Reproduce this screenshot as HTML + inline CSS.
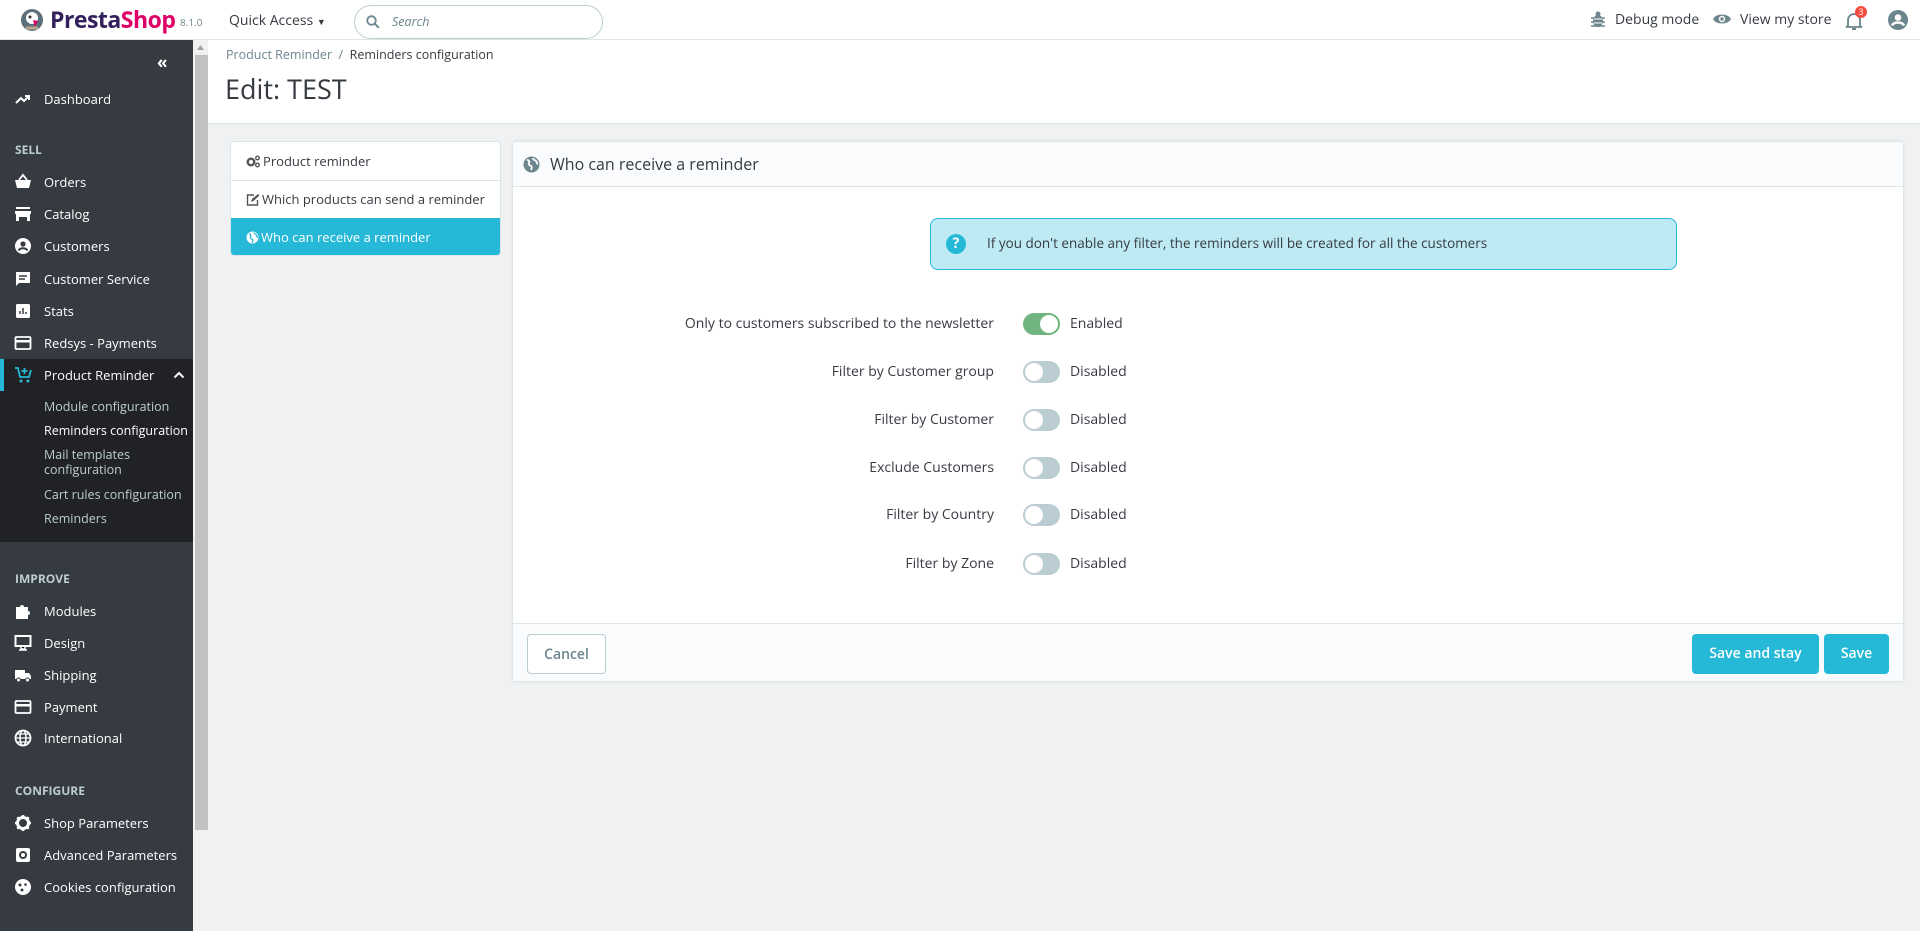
<!DOCTYPE html>
<html><head><meta charset="utf-8"><style>
*{box-sizing:border-box;margin:0;padding:0}
body{width:1920px;height:931px;overflow:hidden;background:#eff1f2;font-family:"Open Sans","Liberation Sans",sans-serif;color:#363a41;position:relative;font-size:14px}
.abs{position:absolute}
#hdr{left:0;top:0;width:1920px;height:40px;background:#fff;border-bottom:1px solid #e4e4e4}
#side{left:0;top:40px;width:193px;height:891px;background:#363a41}
#scroll{left:193px;top:40px;width:15px;height:891px;background:#f1f1f1}
#thumb{left:195px;top:55px;width:13px;height:775px;background:#c1c1c1}
.si{position:absolute;left:0;width:193px;color:#fff;font-size:13px;line-height:20px}
.si svg{position:absolute;left:14px;top:1px}
.si span{position:absolute;left:44px;top:0;white-space:nowrap}
.sec{position:absolute;left:15px;color:#bbcdd2;font-weight:bold;font-size:12px}
.sub{position:absolute;left:44px;color:#bbcdd2;font-size:12.5px;line-height:15px}
#chead{left:208px;top:40px;width:1712px;height:84px;background:#fff;border-bottom:1px solid #dbe6e9}
.tab{position:absolute;left:0;width:271px;padding-left:15px;font-size:13px;color:#363a41}
.tab svg{vertical-align:-2px;margin-right:2px}
.row{position:absolute;left:0;width:1392px;height:24px}
.row .l{position:absolute;right:calc(1392px - 481px);top:2px;font-size:14px;color:#363a41;white-space:nowrap}
.sw{position:absolute;left:510px;top:1px;width:37px;height:22px;border-radius:11px;background:#bbcdd2}
.sw i{position:absolute;top:2px;width:18px;height:18px;border-radius:50%;background:#fff}
.row .t{position:absolute;left:557px;top:2px;font-size:14px;color:#363a41}
.btn{position:absolute;border-radius:4px;font-size:14px;font-weight:600;text-align:center;line-height:39px}
</style></head><body>
<div id="hdr" class="abs">
  <svg class="abs" style="left:20px;top:8px" width="24" height="24" viewBox="0 0 24 24"><circle cx="12" cy="12" r="11" fill="#5d6f7a"/><circle cx="12" cy="10" r="6" fill="#fff"/><circle cx="10" cy="9" r="1.5" fill="#333"/><path d="M13 12l5 1-3 6z" fill="#df0067"/><path d="M6 20h12" stroke="#b7a58c" stroke-width="3"/></svg>
  <div class="abs" style="left:50px;top:3px;font-size:23px;font-weight:bold;letter-spacing:-0.5px;color:#34205c">Presta<span style="color:#df0067">Shop</span></div>
  <div class="abs" style="left:180px;top:15px;font-size:10px;color:#6c868e">8.1.0</div>
  <div class="abs" style="left:229px;top:11px;font-size:14px;color:#363a41">Quick Access <span style="font-size:9px">&#9660;</span></div>
  <div class="abs" style="left:354px;top:5px;width:249px;height:34px;border:1px solid #bbcdd2;border-radius:17px">
    <svg class="abs" style="left:11px;top:9px" width="14" height="14" viewBox="0 0 14 14"><circle cx="5.5" cy="5.5" r="4.3" fill="none" stroke="#6c868e" stroke-width="1.8"/><path d="M8.8 8.8l4 4" stroke="#6c868e" stroke-width="2"/></svg>
    <div class="abs" style="left:37px;top:7px;font-size:12.5px;font-style:italic;color:#6c868e">Search</div>
  </div>
  <svg class="abs" style="left:1590px;top:11px" width="16" height="18" viewBox="0 0 16 18"><ellipse cx="8" cy="10" rx="5" ry="6" fill="#6c868e"/><circle cx="8" cy="3" r="2.5" fill="#6c868e"/><path d="M1 7h14M1 11h14M1 15h14" stroke="#6c868e" stroke-width="1.5"/><path d="M4 8h8M4 12h8" stroke="#fff" stroke-width="1"/></svg>
  <div class="abs" style="left:1615px;top:10px;font-size:14px;color:#363a41">Debug mode</div>
  <svg class="abs" style="left:1712px;top:12px" width="20" height="14" viewBox="0 0 20 14"><path d="M1 7C4 1 16 1 19 7C16 13 4 13 1 7z" fill="#6c868e"/><circle cx="10" cy="7" r="3.2" fill="#fff"/><circle cx="10" cy="7" r="1.7" fill="#6c868e"/></svg>
  <div class="abs" style="left:1740px;top:10px;font-size:14px;color:#363a41">View my store</div>
  <svg class="abs" style="left:1845px;top:11px" width="18" height="20" viewBox="0 0 18 20"><path d="M3 15V9a6 6 0 0 1 12 0v6l2 1H1z" fill="none" stroke="#6c868e" stroke-width="1.8"/><path d="M7 18h4" stroke="#6c868e" stroke-width="2"/></svg>
  <div class="abs" style="left:1855px;top:6px;width:12px;height:12px;border-radius:50%;background:#f54c3e;color:#fff;font-size:9px;line-height:12px;text-align:center">3</div>
  <svg class="abs" style="left:1888px;top:10px" width="20" height="20" viewBox="0 0 20 20"><circle cx="10" cy="10" r="10" fill="#6c868e"/><circle cx="10" cy="7.5" r="3.3" fill="#fff"/><path d="M4 15.5c2-4 10-4 12 0" stroke="#fff" stroke-width="2.5" fill="none"/></svg>
</div>

<div id="side" class="abs">
  <div class="abs" style="left:157px;top:10px;color:#fff;font-size:17px;font-weight:bold">&#171;</div>
  <div class="si" style="top:49px"><svg width="18" height="18" viewBox="0 0 18 18"><path d="M2 13l5-5 3 3 5-5M11 6h4v4" stroke="#fff" stroke-width="2" fill="none"/></svg><span>Dashboard</span></div>
  <div class="sec" style="top:101px">SELL</div>
  <div class="si" style="top:132px"><svg width="18" height="18" viewBox="0 0 18 18"><path d="M1 7h16l-2 8H3z" fill="#fff"/><path d="M5 7l4-5 4 5" stroke="#fff" stroke-width="1.8" fill="none"/></svg><span>Orders</span></div>
  <div class="si" style="top:164px"><svg width="18" height="18" viewBox="0 0 18 18"><rect x="2" y="2" width="14" height="2" fill="#fff"/><path d="M1 6h16v3H1zM2 9h14v7h-3v-4H5v4H2z" fill="#fff"/></svg><span>Catalog</span></div>
  <div class="si" style="top:196px"><svg width="18" height="18" viewBox="0 0 18 18"><circle cx="9" cy="9" r="8" fill="#fff"/><circle cx="9" cy="7" r="2.6" fill="#363a41"/><path d="M4.5 13.5c2-3 7-3 9 0" stroke="#363a41" stroke-width="2" fill="none"/></svg><span>Customers</span></div>
  <div class="si" style="top:229px"><svg width="18" height="18" viewBox="0 0 18 18"><path d="M2 2h14v11H5l-3 3z" fill="#fff"/><path d="M5 6h8M5 9h6" stroke="#363a41" stroke-width="1.5"/></svg><span>Customer Service</span></div>
  <div class="si" style="top:261px"><svg width="18" height="18" viewBox="0 0 18 18"><rect x="2" y="2" width="14" height="14" rx="1.5" fill="#fff"/><path d="M6 12V9M9 12V6M12 12v-2" stroke="#363a41" stroke-width="1.5"/></svg><span>Stats</span></div>
  <div class="si" style="top:293px"><svg width="18" height="18" viewBox="0 0 18 18"><rect x="1.5" y="3" width="15" height="12" rx="1" fill="none" stroke="#fff" stroke-width="1.8"/><rect x="2" y="6" width="14" height="2.5" fill="#fff"/></svg><span>Redsys - Payments</span></div>
  <div class="abs" style="left:0;top:319px;width:193px;height:183px;background:#202226"></div>
  <div class="abs" style="left:0;top:319px;width:4px;height:32px;background:#25b9d7"></div>
  <div class="si" style="top:325px"><svg width="18" height="18" viewBox="0 0 18 18"><path d="M1 2h3l2 9h9l2-7" stroke="#25b9d7" stroke-width="1.8" fill="none"/><circle cx="7" cy="15" r="1.5" fill="#25b9d7"/><circle cx="14" cy="15" r="1.5" fill="#25b9d7"/><path d="M10.5 2v6M7.5 5h6" stroke="#25b9d7" stroke-width="1.8"/></svg><span>Product Reminder</span><svg style="left:173px;top:6px" width="12" height="8" viewBox="0 0 12 8"><path d="M1.5 6.5L6 2l4.5 4.5" stroke="#fff" stroke-width="2" fill="none"/></svg></div>
  <div class="sub" style="top:359px">Module configuration</div>
  <div class="sub" style="top:383px;color:#fff">Reminders configuration</div>
  <div class="sub" style="top:407px">Mail templates<br>configuration</div>
  <div class="sub" style="top:447px">Cart rules configuration</div>
  <div class="sub" style="top:471px">Reminders</div>
  <div class="sec" style="top:530px">IMPROVE</div>
  <div class="si" style="top:561px"><svg width="18" height="18" viewBox="0 0 18 18"><path d="M2 5h4a2 2 0 1 1 4 0h4v4a2 2 0 1 1 0 4v4H2z" fill="#fff"/></svg><span>Modules</span></div>
  <div class="si" style="top:593px"><svg width="18" height="18" viewBox="0 0 18 18"><rect x="1.5" y="2" width="15" height="10" fill="none" stroke="#fff" stroke-width="2"/><path d="M7 13v2h4v-2M5 16h8" stroke="#fff" stroke-width="1.5"/></svg><span>Design</span></div>
  <div class="si" style="top:625px"><svg width="18" height="18" viewBox="0 0 18 18"><path d="M1 4h10v9H1zM11 7h4l2 3v3h-6z" fill="#fff"/><circle cx="4.5" cy="14" r="2" fill="#fff" stroke="#363a41"/><circle cx="13.5" cy="14" r="2" fill="#fff" stroke="#363a41"/></svg><span>Shipping</span></div>
  <div class="si" style="top:657px"><svg width="18" height="18" viewBox="0 0 18 18"><rect x="1.5" y="3" width="15" height="12" rx="1" fill="none" stroke="#fff" stroke-width="1.8"/><rect x="2" y="6" width="14" height="2.5" fill="#fff"/></svg><span>Payment</span></div>
  <div class="si" style="top:688px"><svg width="18" height="18" viewBox="0 0 18 18"><circle cx="9" cy="9" r="7.5" fill="none" stroke="#fff" stroke-width="1.8"/><ellipse cx="9" cy="9" rx="3" ry="7.5" fill="none" stroke="#fff" stroke-width="1.5"/><path d="M1.5 9h15M3 5h12M3 13h12" stroke="#fff" stroke-width="1.3"/></svg><span>International</span></div>
  <div class="sec" style="top:742px">CONFIGURE</div>
  <div class="si" style="top:773px"><svg width="18" height="18" viewBox="0 0 18 18"><circle cx="9" cy="9" r="5.5" fill="none" stroke="#fff" stroke-width="3"/><path d="M9 1v4M9 13v4M1 9h4M13 9h4M3.3 3.3l2.8 2.8M11.9 11.9l2.8 2.8M3.3 14.7l2.8-2.8M11.9 6.1l2.8-2.8" stroke="#fff" stroke-width="2.5"/></svg><span>Shop Parameters</span></div>
  <div class="si" style="top:805px"><svg width="18" height="18" viewBox="0 0 18 18"><rect x="2" y="2" width="14" height="14" rx="2" fill="#fff"/><circle cx="9" cy="9" r="3" fill="none" stroke="#363a41" stroke-width="2"/></svg><span>Advanced Parameters</span></div>
  <div class="si" style="top:837px"><svg width="18" height="18" viewBox="0 0 18 18"><circle cx="9" cy="9" r="8" fill="#fff"/><circle cx="6" cy="7" r="1.5" fill="#363a41"/><circle cx="11.5" cy="6.5" r="1.3" fill="#363a41"/><circle cx="8" cy="12" r="1.5" fill="#363a41"/></svg><span>Cookies configuration</span></div>
</div>
<div id="scroll" class="abs"></div>
<div id="thumb" class="abs"></div>
<svg class="abs" style="left:197px;top:45px" width="7" height="5" viewBox="0 0 7 5"><path d="M0 5L3.5 0 7 5z" fill="#a3a3a3"/></svg>

<div id="chead" class="abs">
  <div class="abs" style="left:18px;top:6px;font-size:12.5px;color:#6c868e">Product Reminder &nbsp;/&nbsp; <span style="color:#363a41">Reminders configuration</span></div>
  <div class="abs" style="left:17px;top:30px;font-size:27px;color:#363a41">Edit: TEST</div>
</div>

<div class="abs" style="left:230px;top:141px;width:271px;height:115px;background:#fff;border:1px solid #dbe6e9;border-radius:4px;overflow:hidden">
  <div class="tab" style="top:0;height:39px;line-height:38px;border-bottom:1px solid #dbe6e9"><svg width="15" height="13" viewBox="0 0 15 13"><circle cx="5" cy="7" r="3.3" fill="none" stroke="#555" stroke-width="2.4"/><circle cx="11.5" cy="3" r="1.8" fill="none" stroke="#555" stroke-width="1.4"/><circle cx="11.5" cy="10" r="1.8" fill="none" stroke="#555" stroke-width="1.4"/></svg>Product reminder</div>
  <div class="tab" style="top:39px;height:38px;line-height:37px"><svg width="14" height="13" viewBox="0 0 14 13"><path d="M8 2H1.5v10h10V7" fill="none" stroke="#555" stroke-width="1.4"/><path d="M5 9l1-3 6-5 1.5 1.5-6 5.5z" fill="#555"/></svg>Which products can send a reminder</div>
  <div class="tab" style="top:76px;height:39px;line-height:38px;background:#25b9d7;color:#fff"><svg width="13" height="13" viewBox="0 0 13 13"><circle cx="6.5" cy="6.5" r="6" fill="#fff"/><path d="M3 3c2 0 2 2 1.5 3s1 2 2 2.5 0 2-0.5 3M8 1.5c0 1.5 2 1.5 2.5 2.5s0 2 1.5 2.5" stroke="#25b9d7" stroke-width="1.3" fill="none"/></svg>Who can receive a reminder</div>
</div>

<div class="abs" style="left:512px;top:141px;width:1392px;height:541px;background:#fff;border:1px solid #dbe6e9;border-radius:4px;box-shadow:0 0 4px rgba(0,0,0,.06)">
  <div class="abs" style="left:0;top:0;width:1390px;height:45px;background:#fafbfc;border-bottom:1px solid #dbe6e9">
    <svg class="abs" style="left:10px;top:14px" width="17" height="17" viewBox="0 0 17 17"><circle cx="8.5" cy="8.5" r="8" fill="#6c868e"/><path d="M4 4c2 0 3 2 2 3s1 3 2 3 1 2 0 4M10 2c0 2 2 2 3 3s1 3 2 3" stroke="#fff" stroke-width="1.8" fill="none"/></svg>
    <div class="abs" style="left:37px;top:11px;font-size:16px;color:#363a41">Who can receive a reminder</div>
  </div>
  <div class="abs" style="left:417px;top:76px;width:747px;height:52px;background:#beeaf3;border:1px solid #25b9d7;border-radius:8px">
    <div class="abs" style="left:15px;top:15px;width:20px;height:20px;border-radius:50%;background:#25b9d7;color:#fff;font-weight:bold;text-align:center;line-height:20px;font-size:14px">?</div>
    <div class="abs" style="left:56px;top:15px;font-size:13.5px;color:#363a41">If you don't enable any filter, the reminders will be created for all the customers</div>
  </div>
  <div class="row" style="top:170px"><div class="l">Only to customers subscribed to the newsletter</div><div class="sw" style="background:#70b580"><i style="right:2px"></i></div><div class="t">Enabled</div></div>
  <div class="row" style="top:218px"><div class="l">Filter by Customer group</div><div class="sw"><i style="left:2px"></i></div><div class="t">Disabled</div></div>
  <div class="row" style="top:266px"><div class="l">Filter by Customer</div><div class="sw"><i style="left:2px"></i></div><div class="t">Disabled</div></div>
  <div class="row" style="top:314px"><div class="l">Exclude Customers</div><div class="sw"><i style="left:2px"></i></div><div class="t">Disabled</div></div>
  <div class="row" style="top:361px"><div class="l">Filter by Country</div><div class="sw"><i style="left:2px"></i></div><div class="t">Disabled</div></div>
  <div class="row" style="top:410px"><div class="l">Filter by Zone</div><div class="sw"><i style="left:2px"></i></div><div class="t">Disabled</div></div>
  <div class="abs" style="left:0;top:481px;width:1390px;height:58px;background:#fafbfc;border-top:1px solid #dbe6e9">
    <div class="btn" style="left:14px;top:10px;width:79px;height:40px;border:1px solid #bbcdd2;background:#fff;color:#6c868e">Cancel</div>
    <div class="btn" style="left:1179px;top:10px;width:127px;height:40px;background:#25b9d7;color:#fff">Save and stay</div>
    <div class="btn" style="left:1311px;top:10px;width:65px;height:40px;background:#25b9d7;color:#fff">Save</div>
  </div>
</div>
</body></html>
